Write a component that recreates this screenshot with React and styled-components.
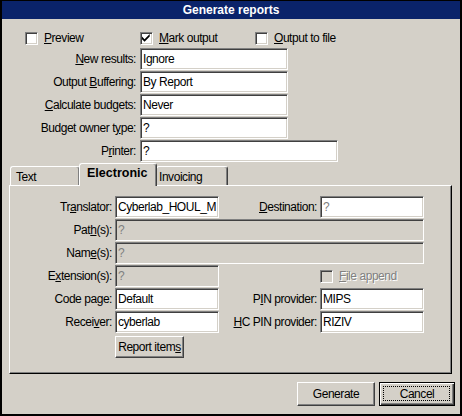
import React from 'react';
import styled, { createGlobalStyle } from 'styled-components';

const Global = createGlobalStyle`
  html, body { margin: 0; padding: 0; background: #d4d0c8; }
  body {
    font-family: "Liberation Sans", Arial, sans-serif;
    font-size: 12px;
    letter-spacing: -0.45px;
    color: #000;
  }
  * { box-sizing: border-box; }
`;

const Window = styled.div`
  width: 462px;
  height: 416px;
  background: #d4d0c8;
  border: 2px solid #000;
  border-top: 1px solid #000;
  display: flex;
  flex-direction: column;
`;

const TitleBar = styled.div`
  height: 18px;
  background: #0a236a;
  color: #fff;
  font-family: "Liberation Sans", Arial, sans-serif;
  font-weight: bold;
  font-size: 12px;
  letter-spacing: 0;
  display: flex;
  align-items: center;
  justify-content: center;
`;

const Body = styled.div`
  flex: 1;
  display: flex;
  flex-direction: column;
  padding: 11px 0 0 0;
`;

const CheckRow = styled.div`
  display: flex;
  height: 16px;
  align-items: center;
  padding-left: 23px;
`;

const CheckItem = styled.label`
  display: flex;
  align-items: center;
  gap: 6px;
  width: ${p => p.$w || 115}px;
  color: ${p => (p.$disabled ? '#808080' : '#000')};
  text-shadow: ${p => (p.$disabled ? '1px 1px 0 #fff' : 'none')};
  white-space: nowrap;
`;

const Box = styled.span`
  width: 13px;
  height: 13px;
  flex: none;
  background: ${p => (p.$disabled ? '#d4d0c8' : '#fff')};
  border: 1px solid;
  border-color: #808080 #fff #fff #808080;
  box-shadow: inset 1px 1px 0 #404040, inset -1px -1px 0 #d4d0c8;
  display: flex;
  align-items: center;
  justify-content: center;
`;

const FormGrid = styled.div`
  display: grid;
  grid-template-columns: 134px auto;
  column-gap: 4px;
  row-gap: 1px;
  grid-auto-rows: 22px;
  margin-top: 2px;
  justify-items: start;
  align-items: center;
`;

const Label = styled.span`
  justify-self: end;
  white-space: nowrap;
`;

const Input = styled.div`
  width: ${p => p.$w}px;
  height: 22px;
  background: ${p => (p.$disabled ? '#d4d0c8' : '#fff')};
  color: ${p => (p.$gray ? '#808080' : '#000')};
  border: 1px solid;
  border-color: #808080 #fff #fff #808080;
  box-shadow: inset 1px 1px 0 #404040, inset -1px -1px 0 #d4d0c8;
  padding: 0 2px;
  display: flex;
  align-items: center;
  white-space: nowrap;
  grid-column: ${p => p.$span || 'auto'};
`;

const TabStrip = styled.div`
  display: flex;
  height: 22px;
  margin-top: 1px;
  padding-left: 8px;
  align-items: flex-end;
  position: relative;
  z-index: 1;
`;

const Tab = styled.div`
  width: ${p => p.$w}px;
  height: ${p => (p.$active ? 23 : 19)}px;
  margin: ${p => (p.$active ? '0 -1px -1px -1px' : '0')};
  padding-left: ${p => p.$pl}px;
  background: #d4d0c8;
  border-left: 1px solid #fff;
  border-top: 1px solid #fff;
  border-right: 1px solid #404040;
  box-shadow: inset -1px 0 0 #808080;
  border-radius: 3px 3px 0 0;
  font-weight: ${p => (p.$active ? 'bold' : 'normal')};
  font-size: ${p => (p.$active ? '12.5px' : '12px')};
  letter-spacing: ${p => (p.$active ? '0' : '-0.45px')};
  display: flex;
  align-items: ${p => (p.$active ? 'flex-start' : 'center')};
  padding-top: ${p => (p.$active ? 2 : 1)}px;
  z-index: ${p => (p.$active ? 2 : 1)};
`;

const Panel = styled.div`
  margin: 0 8px 0 7px;
  height: 189px;
  border-left: 1px solid #fff;
  border-top: 1px solid #fff;
  border-right: 1px solid #000;
  border-bottom: 1px solid #000;
  box-shadow: inset -1px -1px 0 #808080;
  padding: 10px 0 0 2px;
`;

const PanelGrid = styled.div`
  display: grid;
  grid-template-columns: 100px 104px 95px 104px;
  column-gap: 3px;
  row-gap: 1px;
  grid-auto-rows: 22px;
  align-items: center;
  justify-items: start;
`;

const Button = styled.button`
  font: inherit;
  letter-spacing: -0.45px;
  white-space: nowrap;
  width: ${p => p.$w}px;
  height: ${p => p.$h}px;
  background: #d4d0c8;
  color: #000;
  border: 1px solid;
  border-color: ${p => (p.$default ? '#000' : '#fff #404040 #404040 #fff')};
  box-shadow: ${p =>
    p.$default
      ? 'inset 1px 1px 0 #fff, inset -1px -1px 0 #404040, inset -2px -2px 0 #808080'
      : 'inset -1px -1px 0 #808080'};
  padding: 0;
  display: flex;
  align-items: center;
  justify-content: center;
  position: relative;
  grid-column: ${p => p.$col || 'auto'};
  margin-top: ${p => p.$mt || 0}px;
`;

const Focus = styled.span`
  position: absolute;
  inset: 3px 4px 4px 3px;
  border: 1px dotted #000;
`;

const ButtonRow = styled.div`
  display: flex;
  justify-content: flex-end;
  gap: 4px;
  padding: 8px 5px 0 0;
`;

const Check = () => (
  <svg width="9" height="9" viewBox="0 0 7 7">
    <path d="M0 2 L2 4 L6 0 L6 2 L2 6 L0 4 Z" fill="#000" />
  </svg>
);

export default function App() {
  return (
    <>
      <Global />
      <Window>
        <TitleBar>Generate reports</TitleBar>
        <Body>
          <CheckRow>
            <CheckItem><Box /><span><u>P</u>review</span></CheckItem>
            <CheckItem><Box><Check /></Box><span><u>M</u>ark output</span></CheckItem>
            <CheckItem><Box /><span><u>O</u>utput to file</span></CheckItem>
          </CheckRow>
          <FormGrid>
            <Label><u>N</u>ew results:</Label>
            <Input $w={148}>Ignore</Input>
            <Label>Output <u>B</u>uffering:</Label>
            <Input $w={148}>By Report</Input>
            <Label><u>C</u>alculate budgets:</Label>
            <Input $w={148}>Never</Input>
            <Label>Budget owner t<u>y</u>pe:</Label>
            <Input $w={148}>?</Input>
            <Label>P<u>r</u>inter:</Label>
            <Input $w={198}>?</Input>
          </FormGrid>
          <TabStrip>
            <Tab $w={70} $pl={5}>Text</Tab>
            <Tab $w={78} $pl={7} $active>Electronic</Tab>
            <Tab $w={72} $pl={2}>Invoicing</Tab>
          </TabStrip>
          <Panel>
            <PanelGrid>
              <Label>Tr<u>a</u>nslator:</Label>
              <Input $w={104}>Cyberlab_HOUL_M</Input>
              <Label><u>D</u>estination:</Label>
              <Input $w={104} $gray>?</Input>
              <Label>Pat<u>h</u>(s):</Label>
              <Input $w={309} $span="2 / 5" $disabled $gray>?</Input>
              <Label>Nam<u>e</u>(s):</Label>
              <Input $w={309} $span="2 / 5" $disabled $gray>?</Input>
              <Label>E<u>x</u>tension(s):</Label>
              <Input $w={104} $disabled $gray>?</Input>
              <span />
              <CheckItem $disabled $w={104}><Box $disabled /><span><u>F</u>ile append</span></CheckItem>
              <Label>Code page:</Label>
              <Input $w={104}>Default</Input>
              <Label>P<u>I</u>N provider:</Label>
              <Input $w={104}>MIPS</Input>
              <Label>Recei<u>v</u>er:</Label>
              <Input $w={104}>cyberlab</Input>
              <Label><u>H</u>C PIN provider:</Label>
              <Input $w={104}>RIZIV</Input>
              <Button $w={69} $h={22} $col="2" $mt={3}>Report item<u>s</u></Button>
            </PanelGrid>
          </Panel>
          <ButtonRow>
            <Button $w={78} $h={24}>Generate</Button>
            <Button $w={76} $h={24} $default>Cancel<Focus /></Button>
          </ButtonRow>
        </Body>
      </Window>
    </>
  );
}
